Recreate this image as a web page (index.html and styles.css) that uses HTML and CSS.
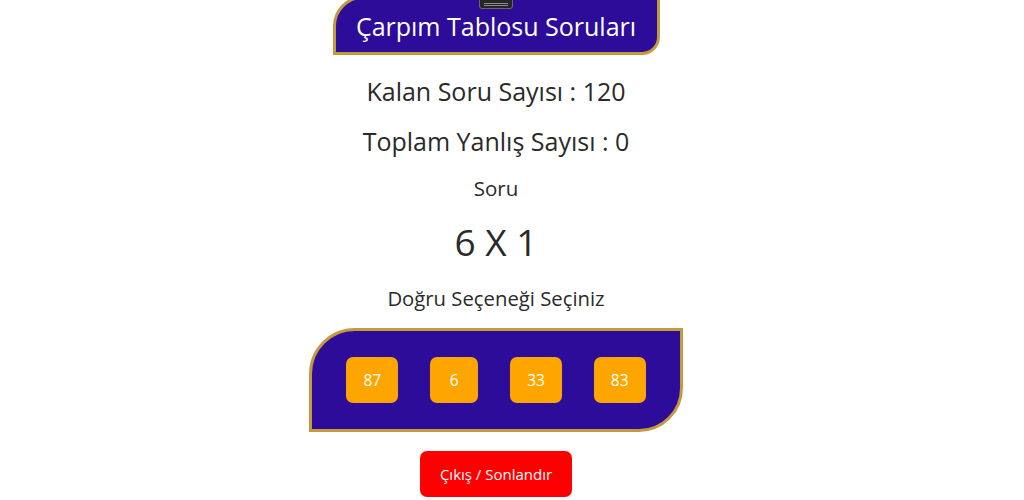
FILE: index.html
```html
<!DOCTYPE html>
<html lang="tr">
<head>
<meta charset="utf-8">
<title>Çarpım Tablosu Soruları</title>
<link rel="stylesheet" href="styles.css">
</head>
<body>
<div class="page">
  <div class="toggle"><span></span></div>
  <div class="title-box">Çarpım Tablosu Soruları</div>
  <div class="stat stat-first">Kalan Soru Sayısı : 120</div>
  <div class="stat">Toplam Yanlış Sayısı : 0</div>
  <div class="label">Soru</div>
  <div class="question">6 X 1</div>
  <div class="label label-choose">Doğru Seçeneği Seçiniz</div>
  <div class="options">
    <button class="opt">87</button>
    <button class="opt">6</button>
    <button class="opt">33</button>
    <button class="opt">83</button>
  </div>
  <button class="exit">Çıkış / Sonlandır</button>
</div>
</body>
</html>
```
FILE: styles.css
```css
* { box-sizing: border-box; }
html, body { margin: 0; padding: 0; background: #fff; }
body {
  font-family: "Open Sans", "Noto Sans", sans-serif;
  color: #2a2a2a;
  overflow: hidden;
  height: 500px;
}
.page {
  position: relative;
  width: 992px;
  display: flex;
  flex-direction: column;
  align-items: center;
  text-align: center;
}
.toggle {
  position: absolute;
  left: 479px;
  top: -4px;
  width: 34px;
  height: 13px;
  background: #262626;
  border: 1px solid #6a6a6a;
  border-radius: 3px;
  z-index: 2;
  display: flex;
  align-items: center;
  justify-content: center;
}
.toggle span {
  display: block;
  width: 24px;
  height: 3px;
  border-top: 1px solid #8a8a8a;
  border-bottom: 1px solid #8a8a8a;
  margin-top: 3px;
}
.title-box {
  margin-top: -4px;
  width: 327px;
  height: 59px;
  background: #2c0c99;
  border: 3px solid #c39b3d;
  border-radius: 30px 0 18px 0;
  color: #fff;
  font-size: 25px;
  line-height: 54px;
}
.stat {
  font-size: 25px;
  line-height: 32px;
  margin-top: 18px;
}
.stat-first { margin-top: 20px; }
.label {
  font-size: 20.5px;
  line-height: 28px;
  margin-top: 17px;
}
.question {
  font-size: 37px;
  line-height: 48px;
  margin-top: 16px;
}
.label-choose { margin-top: 18px; font-size: 20.3px; }
.options {
  margin-top: 16px;
  width: 374px;
  height: 104px;
  background: #2c0c99;
  border: 3px solid #c39b3d;
  border-radius: 46px 0 44px 0;
  display: flex;
  align-items: center;
  justify-content: center;
  gap: 32px;
}
.opt {
  font-family: "Open Sans", "Noto Sans", sans-serif;
  font-size: 15.5px;
  color: #fff;
  background: #ffa500;
  border: none;
  border-radius: 7px;
  height: 46px;
  min-width: 48px;
  padding: 0 17px;
}
.exit {
  margin-top: 19px;
  font-family: "Open Sans", "Noto Sans", sans-serif;
  font-size: 15px;
  color: #fff;
  background: #ff0000;
  border: none;
  border-radius: 7px;
  height: 46px;
  padding: 0 16px;
  width: 152px;
}
```
